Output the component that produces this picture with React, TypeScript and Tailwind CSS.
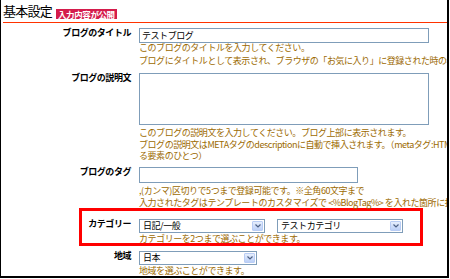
import { ReactNode } from 'react';

const FONT = '"Noto Sans CJK JP", "Liberation Sans", sans-serif';

const Help = ({ children, className = '' }: { children: ReactNode; className?: string }) => (
  <div className={`whitespace-nowrap text-[9px] tracking-[-0.45px] text-[#9c6a00] ${className}`}>{children}</div>
);

const Label = ({ text, width }: { text: string; width: string }) => (
  <div className={`${width} shrink-0 pr-[8px] text-right text-[9px] font-bold leading-[10px] tracking-[-0.45px] text-black`}>
    {text}
  </div>
);

const Select = ({ value, width }: { value: string; width: string }) => (
  <div className={`${width} flex h-[14px] items-center justify-between border border-[#7f9db9] bg-white pl-[3px] pr-[1px]`}>
    <span className="text-[9px] leading-[10px] tracking-[-0.45px] text-black">{value}</span>
    <span className="flex h-[10px] w-[11px] items-center justify-center rounded-[1px] border border-[#b9cdf5] bg-gradient-to-b from-[#e6eefc] to-[#bcd0f7]">
      <svg width="6" height="4" viewBox="0 0 6 4">
        <path d="M0.5 0.5 L3 3 L5.5 0.5" fill="none" stroke="#4d6185" strokeWidth="1.2" />
      </svg>
    </span>
  </div>
);

export default function App() {
  return (
    <div
      className="h-[278px] w-[449px] overflow-hidden border-b-2 border-l border-r-2 border-black bg-white"
      style={{ fontFamily: FONT }}
    >
      {/* heading */}
      <div className="ml-[2px] flex h-[23px] items-start border-b border-[#ff3300]">
        <span className="pt-[3px] text-[13px] leading-[15px] tracking-[-0.75px] text-black">基本設定</span>
        <span className="ml-[4px] mt-[9px] flex h-[10px] items-center bg-[#d41c4c] px-[2px] text-[8.5px] font-bold leading-[10px] tracking-[-0.4px] text-white">
          入力内容が公開
        </span>
      </div>

      {/* title */}
      <div className="mt-[5px] flex items-start">
        <Label text="ブログのタイトル" width="w-[138px]" />
        <div>
          <div className="flex h-[15px] w-[290px] items-center border border-[#7f9db9] pl-[2px] text-[9px] tracking-[-0.45px] text-black">
            テストブログ
          </div>
          <Help className="mt-[-2px] leading-[13px]">
            <div>このブログのタイトルを入力してください。</div>
            <div>ブログにタイトルとして表示され、ブラウザの「お気に入り」に登録された時の名称になります。</div>
          </Help>
        </div>
      </div>

      {/* description */}
      <div className="mt-[6px] flex items-start">
        <Label text="ブログの説明文" width="w-[138px]" />
        <div>
          <div className="h-[52px] w-[290px] border border-[#7f9db9]" />
          <Help className="mt-[2px] leading-[11.5px]">
            <div>このブログの説明文を入力してください。ブログ上部に表示されます。</div>
            <div>ブログの説明文はMETAタグのdescriptionに自動で挿入されます。（metaタグ:HTMLのheadタグ内に記述す</div>
            <div>る要素のひとつ）</div>
          </Help>
        </div>
      </div>

      {/* tags */}
      <div className="mt-[5.5px] flex items-start">
        <Label text="ブログのタグ" width="w-[138px]" />
        <div>
          <div className="h-[16px] w-[219px] border border-[#7f9db9]" />
          <Help className="mt-[2px] leading-[12px]">
            <div>,(カンマ)区切りで5つまで登録可能です。※全角60文字まで</div>
            <div>入力されたタグはテンプレートのカスタマイズで &lt;%BlogTag%&gt; を入れた箇所に挿入されます。</div>
          </Help>
        </div>
      </div>

      {/* category (highlighted) */}
      <div className="ml-[78px] mt-[-1px] flex h-[38px] w-[344px] items-start border-[3px] border-[#ff0000] pt-[8px]">
        <Label text="カテゴリー" width="w-[57px]" />
        <div>
          <div className="flex gap-[12px]">
            <Select value="日記/一般" width="w-[126px]" />
            <Select value="テストカテゴリ" width="w-[126px]" />
          </div>
          <Help className="mt-[1px] leading-[10px]">カテゴリーを2つまで選ぶことができます。</Help>
        </div>
      </div>

      {/* region */}
      <div className="mt-[5px] flex items-start">
        <Label text="地域" width="w-[138px]" />
        <div>
          <Select value="日本" width="w-[118px]" />
          <Help className="leading-[12px]">地域を選ぶことができます。</Help>
        </div>
      </div>
    </div>
  );
}
